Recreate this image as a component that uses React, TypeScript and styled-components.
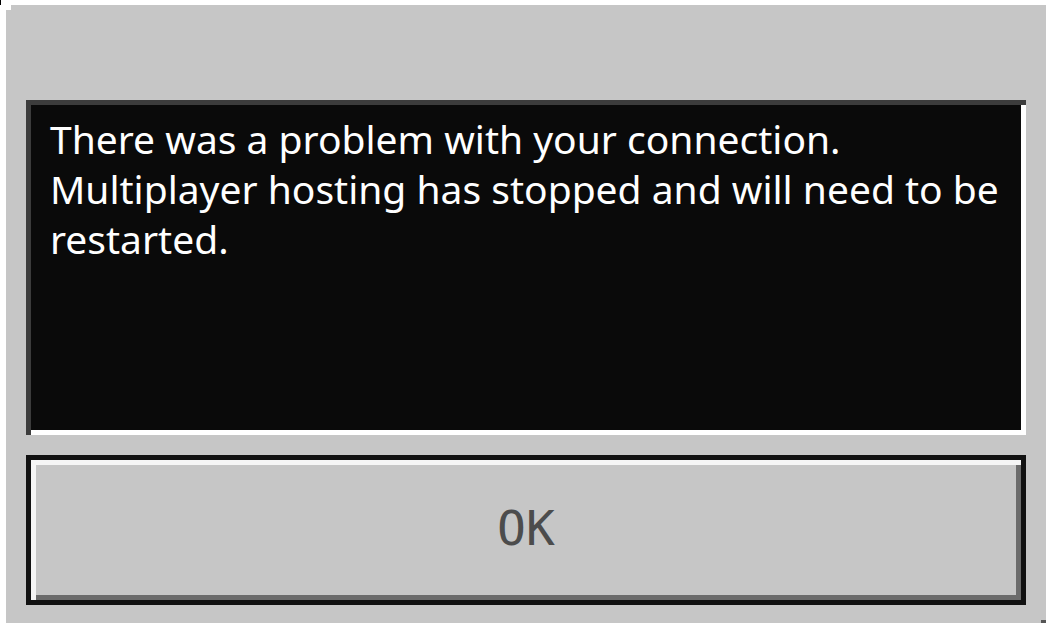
import styled, { createGlobalStyle } from 'styled-components'

const GlobalStyle = createGlobalStyle`
  html, body {
    margin: 0;
    padding: 0;
    background: #ffffff;
  }
  body {
    width: 1046px;
    height: 623px;
    overflow: hidden;
  }
`

const Screen = styled.div`
  position: relative;
  width: 1046px;
  height: 623px;
  box-sizing: border-box;
  padding: 5px 0 0 6px;

  &::before {
    content: '';
    position: absolute;
    left: 0;
    top: 0;
    width: 1px;
    height: 5px;
    background: #000;
  }
`

const Panel = styled.div`
  position: relative;
  width: 1040px;
  height: 618px;
  box-sizing: border-box;
  background: #c6c6c6;
  padding: 95px 20px 18px 20px;
  display: flex;
  flex-direction: column;
  gap: 20px;
  clip-path: polygon(5px 0, 100% 0, 100% 100%, 0 100%, 0 5px, 5px 5px);

  &::after {
    content: '';
    position: absolute;
    right: 0;
    bottom: 0;
    width: 5px;
    height: 3px;
    background: #555;
  }
`

const MessageBox = styled.div`
  height: 335px;
  box-sizing: border-box;
  background: #0a0a0a;
  box-shadow: inset 5px 5px 0 #3c3c3c, inset -5px -5px 0 #ffffff;
  padding: 14px 8px 0 24px;
`

const Message = styled.p`
  margin: 0;
  color: #ffffff;
  font-family: 'Noto Sans', 'Open Sans', sans-serif;
  font-size: 39px;
  line-height: 50px;
`

const Button = styled.button`
  height: 150px;
  box-sizing: border-box;
  border: 5px solid #111111;
  background: #c6c6c6;
  box-shadow: inset 5px 5px 0 #f5f5f5, inset -5px -5px 0 #6b6b6b;
  display: flex;
  align-items: center;
  justify-content: center;
  padding: 0 0 4px 0;
  cursor: pointer;
`

const ButtonLabel = styled.span`
  color: #4c4c4c;
  font-family: 'DejaVu Sans Mono', 'Liberation Mono', monospace;
  font-size: 48px;
  line-height: 1;
`

export default function App() {
  return (
    <>
      <GlobalStyle />
      <Screen>
        <Panel>
          <MessageBox>
            <Message>
              There was a problem with your connection. Multiplayer hosting has stopped and will need to be restarted.
            </Message>
          </MessageBox>
          <Button>
            <ButtonLabel>OK</ButtonLabel>
          </Button>
        </Panel>
      </Screen>
    </>
  )
}
